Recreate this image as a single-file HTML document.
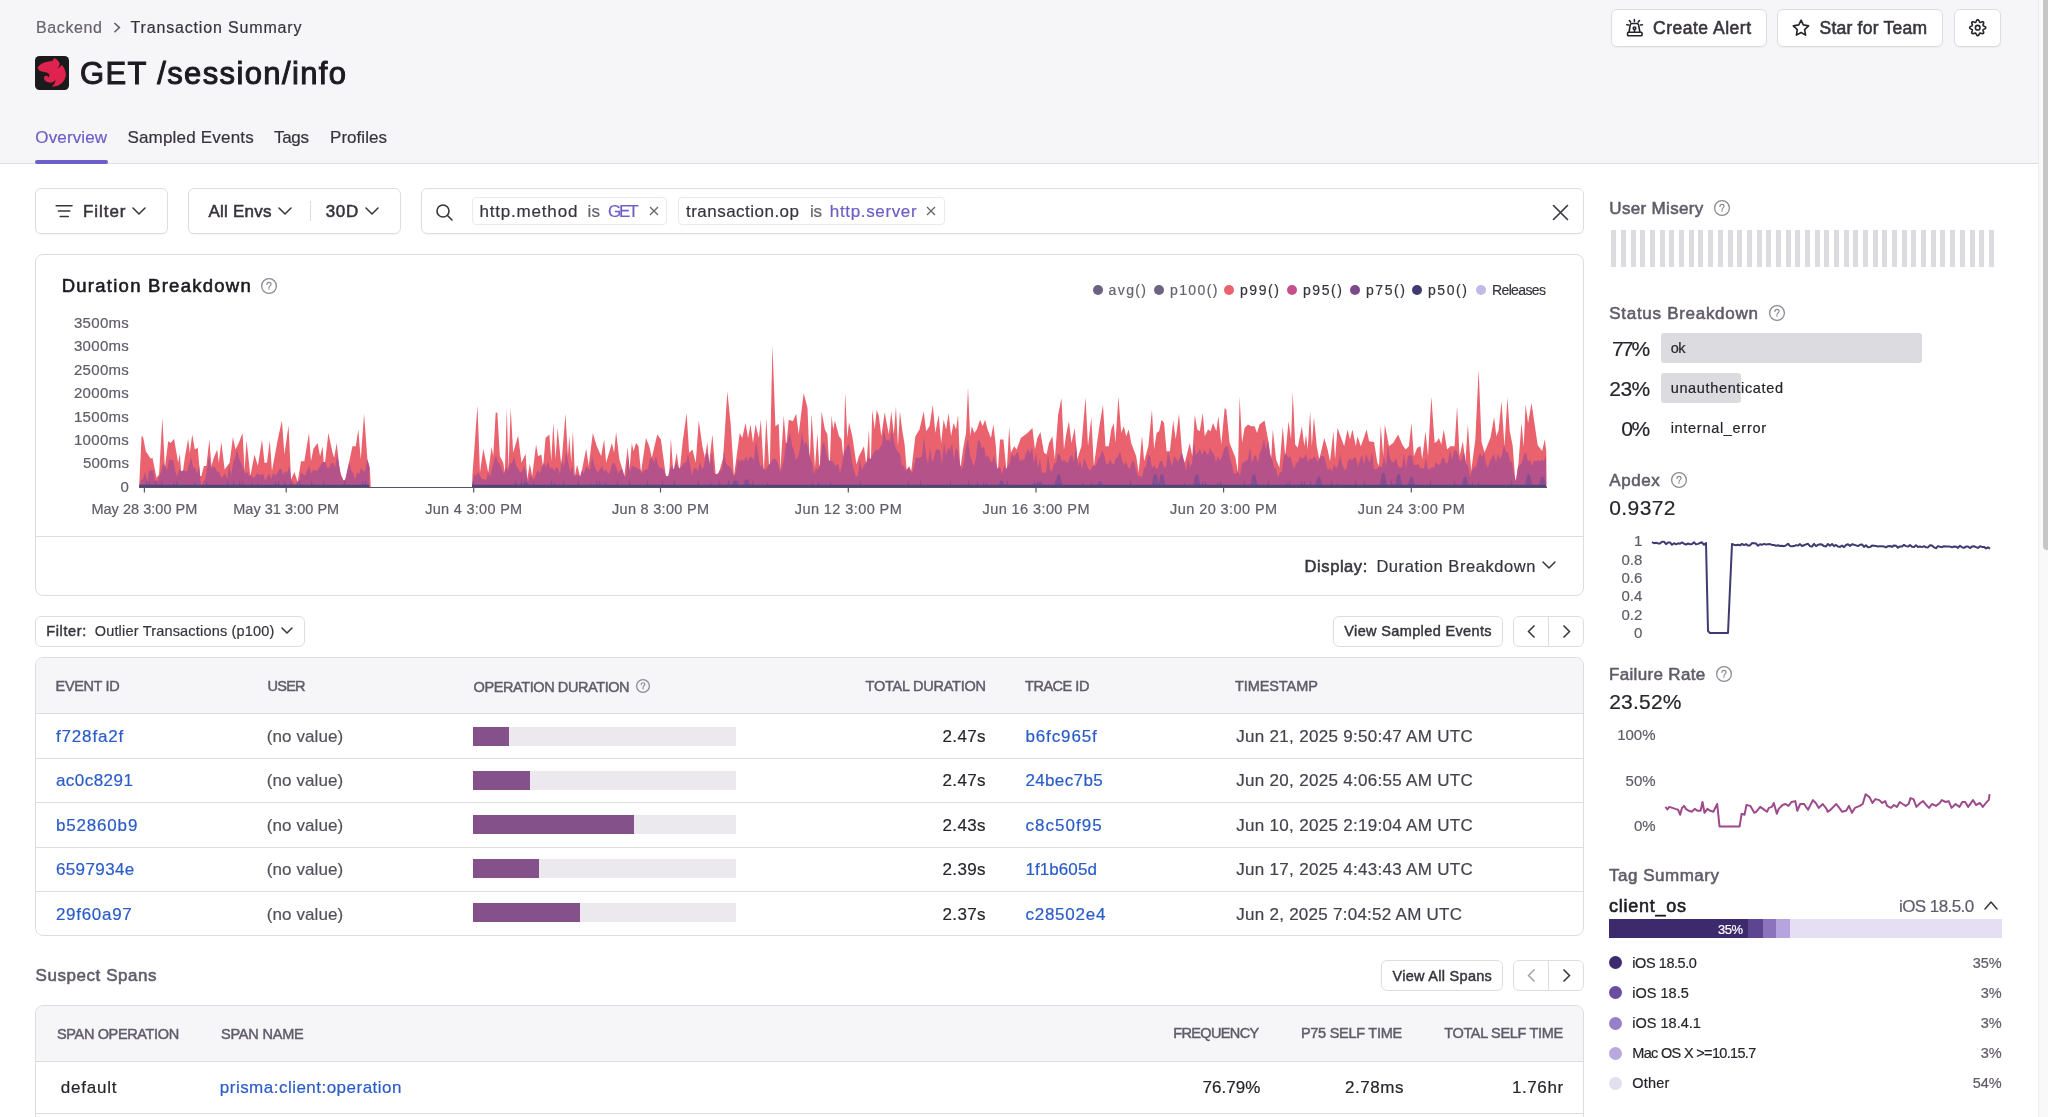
<!DOCTYPE html>
<html><head><meta charset="utf-8"><style>
html,body{margin:0;padding:0;}
body{width:2048px;height:1117px;position:relative;overflow:hidden;background:#ffffff;font-family:"Liberation Sans",sans-serif;}
.t{position:absolute;white-space:nowrap;line-height:1;}
#root{position:absolute;left:0;top:0;width:2048px;height:1117px;will-change:transform;}
.r{position:absolute;box-sizing:border-box;}
svg.r{overflow:visible;}
</style></head><body>
<div id="root">
<div class="r" style="left:0px;top:0px;width:2038px;height:163px;background:#f6f6f9;"></div>
<div class="r" style="left:0px;top:163px;width:2038px;height:1px;background:#dddce1;"></div>
<div class="r" style="left:2038px;top:0px;width:10px;height:1117px;background:#f9f9f9;"></div>
<div class="r" style="left:2038px;top:0px;width:1px;height:1117px;background:#ececec;"></div>
<div class="r" style="left:2043px;top:0px;width:5px;height:550px;background:#c6c6c6;border-radius:0 0 0 4px;"></div>
<div class="t " style="left:36.00px;top:19.76px;font-size:16px;color:#67636e;-webkit-text-stroke:0.2px #67636e;letter-spacing:0.617px;">Backend</div>
<svg class="r" style="left:110px;top:20px;" width="12" height="16" viewBox="0 0 12 16"><path d="M4.4 3 L9.4 7.6 L4.4 12.2" fill="none" stroke="#5f5b66" stroke-width="1.5"/></svg>
<div class="t " style="left:130.50px;top:19.76px;font-size:16px;color:#38343e;-webkit-text-stroke:0.2px #38343e;letter-spacing:0.839px;">Transaction Summary</div>
<svg class="r" style="left:35px;top:56px" width="34" height="34" viewBox="0 0 34 34"><rect width="34" height="34" rx="4.5" fill="#1b1a1c"/><path d="M2.4 11.4 C5 8.5 8 6.6 11 6 C13.5 5.5 16 5.3 17.9 4.5 L19 2.1 C21 2.8 23.5 4.5 24.6 7.2 C24.9 9 24 11 21.6 12.6 C23.5 12 25.5 10.5 26.8 9 C29.5 11.5 30.8 15 30.8 18.6 C30.8 23.5 27.5 28 22 30 L16.9 30.8 C18.8 29 20.6 26.5 20.5 23.5 C19.6 25.6 17.8 26.6 15.5 26.6 C11.8 26.6 9 24.5 9 21.8 C9 20.4 10.2 19.6 11.6 19.8 C12.6 20 13.3 20.7 13.5 21.5 C14.5 20.5 14.7 18.4 13.6 17.4 C11.5 15.8 7 16.2 4.5 14.8 Z" fill="#e0234e"/></svg>
<div class="t " style="left:80.00px;top:58.06px;font-size:31px;color:#1d1a21;-webkit-text-stroke:0.99px #1d1a21;letter-spacing:1.369px;">GET /session/info</div>
<div class="t " style="left:35.30px;top:129.31px;font-size:17px;color:#6c5fc7;-webkit-text-stroke:0.2px #6c5fc7;letter-spacing:0.143px;">Overview</div>
<div class="t " style="left:127.40px;top:129.31px;font-size:17px;color:#38343e;-webkit-text-stroke:0.2px #38343e;letter-spacing:0.200px;">Sampled Events</div>
<div class="t " style="left:274.00px;top:129.31px;font-size:17px;color:#38343e;-webkit-text-stroke:0.2px #38343e;letter-spacing:-0.300px;">Tags</div>
<div class="t " style="left:330.00px;top:129.31px;font-size:17px;color:#38343e;-webkit-text-stroke:0.2px #38343e;letter-spacing:0.043px;">Profiles</div>
<div class="r" style="left:35px;top:160px;width:73px;height:4px;background:#6c5fc7;border-radius:2px;"></div>
<div class="r" style="left:1611px;top:9px;width:156px;height:38px;background:#ffffff;border:1px solid #dddce1;border-radius:6px;box-sizing:border-box;box-shadow:0 1px 1px rgba(0,0,0,0.04);"></div>
<div class="r" style="left:1777px;top:9px;width:166px;height:38px;background:#ffffff;border:1px solid #dddce1;border-radius:6px;box-sizing:border-box;box-shadow:0 1px 1px rgba(0,0,0,0.04);"></div>
<div class="r" style="left:1954px;top:9px;width:47px;height:38px;background:#ffffff;border:1px solid #dddce1;border-radius:6px;box-sizing:border-box;box-shadow:0 1px 1px rgba(0,0,0,0.04);"></div>
<div class="t " style="left:1653.00px;top:19.69px;font-size:17.5px;color:#38343e;-webkit-text-stroke:0.56px #38343e;letter-spacing:0.509px;">Create Alert</div>
<div class="t " style="left:1819.50px;top:19.69px;font-size:17.5px;color:#38343e;-webkit-text-stroke:0.56px #38343e;letter-spacing:0.233px;">Star for Team</div>
<svg class="r" style="left:1624px;top:16px;" width="22" height="24" viewBox="0 0 22 24"><g fill="none" stroke="#27242c" stroke-width="1.6" stroke-linecap="round" stroke-linejoin="round"><path d="M10.4 3.6 V5.4 M5.3 4.5 L6.6 6.1 M15.5 4.5 L14.2 6.1 M2.8 8.7 L4.6 9 M16.6 9 L18.4 8.7"/><path d="M5.1 15.6 L6.2 9 Q6.5 7.5 8 7.5 H12.8 Q14.3 7.5 14.6 9 L15.8 15.6"/><circle cx="10.5" cy="12.3" r="1.3"/><path d="M10.5 13.6 V15.6"/><rect x="3.6" y="16.3" width="14.4" height="3.5" rx="0.8"/></g></svg>
<svg class="r" style="left:1785px;top:12px;" width="30" height="30" viewBox="0 0 30 30"><path d="M16.1 8.1 L18.3 12.9 L23.6 13.9 L19.6 17.7 L20.6 23.1 L16.1 20.5 L11.4 23.1 L12.3 17.7 L8.3 13.9 L13.8 12.9 Z" fill="none" stroke="#27242c" stroke-width="1.6" stroke-linejoin="round"/></svg>
<svg class="r" style="left:1962px;top:12px;" width="32" height="32" viewBox="0 0 32 32"><g fill="none" stroke="#27242c" stroke-width="1.6" stroke-linejoin="round"><path d="M15.70 7.65 L16.22 7.82 L16.68 8.29 L17.05 8.93 L17.34 9.59 L17.60 10.11 L17.90 10.39 L18.31 10.40 L18.86 10.22 L19.53 9.96 L20.25 9.77 L20.91 9.76 L21.39 10.01 L21.64 10.49 L21.63 11.15 L21.44 11.87 L21.18 12.54 L21.00 13.09 L21.01 13.50 L21.29 13.80 L21.81 14.06 L22.47 14.35 L23.11 14.72 L23.58 15.18 L23.75 15.70 L23.58 16.22 L23.11 16.68 L22.47 17.05 L21.81 17.34 L21.29 17.60 L21.01 17.90 L21.00 18.31 L21.18 18.86 L21.44 19.53 L21.63 20.25 L21.64 20.91 L21.39 21.39 L20.91 21.64 L20.25 21.63 L19.53 21.44 L18.86 21.18 L18.31 21.00 L17.90 21.01 L17.60 21.29 L17.34 21.81 L17.05 22.47 L16.68 23.11 L16.22 23.58 L15.70 23.75 L15.18 23.58 L14.72 23.11 L14.35 22.47 L14.06 21.81 L13.80 21.29 L13.50 21.01 L13.09 21.00 L12.54 21.18 L11.87 21.44 L11.15 21.63 L10.49 21.64 L10.01 21.39 L9.76 20.91 L9.77 20.25 L9.96 19.53 L10.22 18.86 L10.40 18.31 L10.39 17.90 L10.11 17.60 L9.59 17.34 L8.93 17.05 L8.29 16.68 L7.82 16.22 L7.65 15.70 L7.82 15.18 L8.29 14.72 L8.93 14.35 L9.59 14.06 L10.11 13.80 L10.39 13.50 L10.40 13.09 L10.22 12.54 L9.96 11.87 L9.77 11.15 L9.76 10.49 L10.01 10.01 L10.49 9.76 L11.15 9.77 L11.87 9.96 L12.54 10.22 L13.09 10.40 L13.50 10.39 L13.80 10.11 L14.06 9.59 L14.35 8.93 L14.72 8.29 L15.18 7.82 L15.70 7.65 Z"/><circle cx="15.7" cy="15.7" r="2.3"/></g></svg>
<div class="r" style="left:35px;top:188px;width:133px;height:46px;background:#ffffff;border:1px solid #dddce1;border-radius:6px;box-sizing:border-box;box-shadow:0 1px 1px rgba(0,0,0,0.04);"></div>
<svg class="r" style="left:54px;top:203px;" width="22" height="17" viewBox="0 0 22 17"><g stroke="#38343e" stroke-width="1.6" stroke-linecap="round"><path d="M2.2 2.7 H18 M4.4 8 H15.8 M6.2 13.5 H14.2"/></g></svg>
<div class="t " style="left:82.90px;top:203.11px;font-size:17px;color:#38343e;-webkit-text-stroke:0.54px #38343e;letter-spacing:0.960px;">Filter</div>
<svg class="r" style="left:131.5px;top:207px;" width="14.0" height="8" viewBox="0 0 14.0 8"><path d="M1 1 L7.0 7 L13 1" fill="none" stroke="#38343e" stroke-width="1.5" stroke-linecap="round" stroke-linejoin="round"/></svg>
<div class="r" style="left:188px;top:188px;width:213px;height:46px;background:#ffffff;border:1px solid #dddce1;border-radius:6px;box-sizing:border-box;box-shadow:0 1px 1px rgba(0,0,0,0.04);"></div>
<div class="r" style="left:310px;top:201px;width:1px;height:20px;background:#dddce1;"></div>
<div class="t " style="left:208.50px;top:203.11px;font-size:17px;color:#38343e;-webkit-text-stroke:0.54px #38343e;letter-spacing:0.229px;">All Envs</div>
<svg class="r" style="left:278px;top:207px;" width="14" height="8" viewBox="0 0 14 8"><path d="M1 1 L7.0 7 L13 1" fill="none" stroke="#38343e" stroke-width="1.5" stroke-linecap="round" stroke-linejoin="round"/></svg>
<div class="t " style="left:325.70px;top:203.11px;font-size:17px;color:#38343e;-webkit-text-stroke:0.54px #38343e;letter-spacing:0.700px;">30D</div>
<svg class="r" style="left:365px;top:207px;" width="14" height="8" viewBox="0 0 14 8"><path d="M1 1 L7.0 7 L13 1" fill="none" stroke="#38343e" stroke-width="1.5" stroke-linecap="round" stroke-linejoin="round"/></svg>
<div class="r" style="left:421px;top:188px;width:1163px;height:46px;background:#ffffff;border:1px solid #dddce1;border-radius:6px;box-sizing:border-box;box-shadow:0 1px 1px rgba(0,0,0,0.04);"></div>
<svg class="r" style="left:434px;top:202px;" width="22" height="22" viewBox="0 0 22 22"><g fill="none" stroke="#38343e" stroke-width="1.6" stroke-linecap="round"><circle cx="9" cy="9" r="6"/><path d="M13.5 13.5 L18 18"/></g></svg>
<div class="r" style="left:472px;top:197px;width:195px;height:28px;background:#ffffff;border:1px solid #ebe8ef;border-radius:4px;box-sizing:border-box;"></div>
<div class="t " style="left:479.40px;top:203.11px;font-size:17px;color:#38343e;-webkit-text-stroke:0.2px #38343e;letter-spacing:0.820px;">http.method</div>
<div class="t " style="left:587.50px;top:203.11px;font-size:17px;color:#67636e;-webkit-text-stroke:0.2px #67636e;letter-spacing:0.200px;">is</div>
<div class="t " style="left:607.90px;top:203.11px;font-size:17px;color:#6c5fc7;-webkit-text-stroke:0.2px #6c5fc7;letter-spacing:-2.150px;">GET</div>
<svg class="r" style="left:648px;top:205px;" width="12" height="12" viewBox="0 0 12 12"><path d="M2 2 L10 10 M10 2 L2 10" stroke="#67636e" stroke-width="1.3"/></svg>
<div class="r" style="left:678px;top:197px;width:267px;height:28px;background:#ffffff;border:1px solid #ebe8ef;border-radius:4px;box-sizing:border-box;"></div>
<div class="t " style="left:686.00px;top:203.11px;font-size:17px;color:#38343e;-webkit-text-stroke:0.2px #38343e;letter-spacing:0.477px;">transaction.op</div>
<div class="t " style="left:810.00px;top:203.11px;font-size:17px;color:#67636e;-webkit-text-stroke:0.2px #67636e;letter-spacing:-0.300px;">is</div>
<div class="t " style="left:829.80px;top:203.11px;font-size:17px;color:#6c5fc7;-webkit-text-stroke:0.2px #6c5fc7;letter-spacing:0.650px;">http.server</div>
<svg class="r" style="left:925px;top:205px;" width="12" height="12" viewBox="0 0 12 12"><path d="M2 2 L10 10 M10 2 L2 10" stroke="#67636e" stroke-width="1.3"/></svg>
<svg class="r" style="left:1551px;top:203px;" width="19" height="19" viewBox="0 0 19 19"><path d="M2.5 2.5 L16.5 16.5 M16.5 2.5 L2.5 16.5" stroke="#38343e" stroke-width="1.6" stroke-linecap="round"/></svg>
<div class="r" style="left:35px;top:254px;width:1549px;height:342px;background:#ffffff;border:1px solid #dddce1;border-radius:8px;box-sizing:border-box;"></div>
<div class="r" style="left:36px;top:536px;width:1547px;height:1px;background:#dddce1;"></div>
<div class="t " style="left:61.70px;top:276.64px;font-size:18.5px;color:#1d1a21;-webkit-text-stroke:0.59px #1d1a21;letter-spacing:1.259px;">Duration Breakdown</div>
<svg class="r" style="left:260px;top:277px;" width="18" height="18" viewBox="0 0 18 18"><circle cx="9" cy="9" r="7.4" fill="none" stroke="#8c8a92" stroke-width="1.3"/><path d="M6.92 7.48 C6.92 5.80 8.04 5.32 9.00 5.32 C10.20 5.32 11.08 6.12 11.08 7.24 C11.08 8.68 9.00 9.16 9.00 10.76 M9.00 11.72 V12.36" fill="none" stroke="#8c8a92" stroke-width="1.15" stroke-linecap="round"/></svg>
<div class="r" style="left:1092.9px;top:284.5px;width:10.0px;height:10.0px;background:#6b6180;border-radius:5px;"></div>
<div class="t " style="left:1108.60px;top:282.65px;font-size:14px;color:#67636e;-webkit-text-stroke:0.2px #67636e;letter-spacing:1.375px;">avg()</div>
<div class="r" style="left:1154.2px;top:284.5px;width:10.0px;height:10.0px;background:#6d6382;border-radius:5px;"></div>
<div class="t " style="left:1170.00px;top:282.65px;font-size:14px;color:#67636e;-webkit-text-stroke:0.2px #67636e;letter-spacing:1.400px;">p100()</div>
<div class="r" style="left:1224px;top:284.5px;width:10px;height:10.0px;background:#e9626e;border-radius:5px;"></div>
<div class="t " style="left:1240.00px;top:282.65px;font-size:14px;color:#38343e;-webkit-text-stroke:0.2px #38343e;letter-spacing:1.575px;">p99()</div>
<div class="r" style="left:1287px;top:284.5px;width:10px;height:10.0px;background:#c5508a;border-radius:5px;"></div>
<div class="t " style="left:1303.00px;top:282.65px;font-size:14px;color:#38343e;-webkit-text-stroke:0.2px #38343e;letter-spacing:1.575px;">p95()</div>
<div class="r" style="left:1350px;top:284.5px;width:10px;height:10.0px;background:#7c4a8c;border-radius:5px;"></div>
<div class="t " style="left:1366.00px;top:282.65px;font-size:14px;color:#38343e;-webkit-text-stroke:0.2px #38343e;letter-spacing:1.575px;">p75()</div>
<div class="r" style="left:1412.4px;top:284.5px;width:10.0px;height:10.0px;background:#3f3b72;border-radius:5px;"></div>
<div class="t " style="left:1428.00px;top:282.65px;font-size:14px;color:#38343e;-webkit-text-stroke:0.2px #38343e;letter-spacing:1.575px;">p50()</div>
<div class="r" style="left:1476px;top:284.5px;width:10px;height:10.0px;background:#c3b9e9;border-radius:5px;"></div>
<div class="t " style="left:1492.00px;top:282.65px;font-size:14px;color:#38343e;-webkit-text-stroke:0.2px #38343e;letter-spacing:-0.629px;">Releases</div>
<div class="t " style="left:73.90px;top:314.90px;font-size:15px;color:#605b69;-webkit-text-stroke:0.2px #605b69;letter-spacing:0.320px;">3500ms</div>
<div class="t " style="left:73.90px;top:338.30px;font-size:15px;color:#605b69;-webkit-text-stroke:0.2px #605b69;letter-spacing:0.320px;">3000ms</div>
<div class="t " style="left:73.90px;top:361.70px;font-size:15px;color:#605b69;-webkit-text-stroke:0.2px #605b69;letter-spacing:0.320px;">2500ms</div>
<div class="t " style="left:73.90px;top:385.10px;font-size:15px;color:#605b69;-webkit-text-stroke:0.2px #605b69;letter-spacing:0.320px;">2000ms</div>
<div class="t " style="left:73.90px;top:408.50px;font-size:15px;color:#605b69;-webkit-text-stroke:0.2px #605b69;letter-spacing:0.320px;">1500ms</div>
<div class="t " style="left:73.90px;top:431.90px;font-size:15px;color:#605b69;-webkit-text-stroke:0.2px #605b69;letter-spacing:0.320px;">1000ms</div>
<div class="t " style="left:82.90px;top:455.30px;font-size:15px;color:#605b69;-webkit-text-stroke:0.2px #605b69;letter-spacing:0.250px;">500ms</div>
<div class="t " style="left:120.60px;top:478.70px;font-size:15px;color:#605b69;-webkit-text-stroke:0.2px #605b69;">0</div>
<div class="t " style="left:91.40px;top:502.03px;font-size:14.5px;color:#605b69;-webkit-text-stroke:0.2px #605b69;letter-spacing:0.031px;">May 28 3:00 PM</div>
<div class="t " style="left:233.20px;top:502.03px;font-size:14.5px;color:#605b69;-webkit-text-stroke:0.2px #605b69;letter-spacing:0.031px;">May 31 3:00 PM</div>
<div class="t " style="left:425.20px;top:502.03px;font-size:14.5px;color:#605b69;-webkit-text-stroke:0.2px #605b69;letter-spacing:0.292px;">Jun 4 3:00 PM</div>
<div class="t " style="left:612.00px;top:502.03px;font-size:14.5px;color:#605b69;-webkit-text-stroke:0.2px #605b69;letter-spacing:0.292px;">Jun 8 3:00 PM</div>
<div class="t " style="left:794.80px;top:502.03px;font-size:14.5px;color:#605b69;-webkit-text-stroke:0.2px #605b69;letter-spacing:0.415px;">Jun 12 3:00 PM</div>
<div class="t " style="left:982.50px;top:502.03px;font-size:14.5px;color:#605b69;-webkit-text-stroke:0.2px #605b69;letter-spacing:0.415px;">Jun 16 3:00 PM</div>
<div class="t " style="left:1170.10px;top:502.03px;font-size:14.5px;color:#605b69;-webkit-text-stroke:0.2px #605b69;letter-spacing:0.415px;">Jun 20 3:00 PM</div>
<div class="t " style="left:1357.80px;top:502.03px;font-size:14.5px;color:#605b69;-webkit-text-stroke:0.2px #605b69;letter-spacing:0.415px;">Jun 24 3:00 PM</div>
<svg class="r" style="left:130px;top:330px;" width="1430" height="170" viewBox="0 0 1430 170"><path d="M9.15 157.50 L9.15 126.16 L9.15 156.04 L11.64 105.41 L13.30 107.90 L15.79 121.18 L20.77 128.65 L22.43 127.82 L26.58 147.74 L29.07 144.42 L32.39 87.98 L34.88 137.78 L38.20 111.22 L40.69 112.88 L44.01 108.73 L48.16 132.80 L49.82 123.67 L51.81 149.40 L54.80 127.82 L58.12 108.73 L59.78 122.84 L62.27 104.58 L64.76 119.52 L67.75 117.86 L70.07 146.08 L71.40 146.08 L73.89 136.12 L76.38 136.12 L79.37 109.56 L81.36 136.12 L83.85 127.82 L87.17 119.52 L88.83 132.80 L91.32 112.05 L94.64 139.44 L99.62 132.80 L102.94 107.07 L105.43 119.52 L108.75 112.88 L112.57 102.92 L114.56 141.10 L116.55 110.39 L120.37 146.08 L124.52 124.50 L127.84 136.12 L131.99 109.56 L134.48 132.80 L136.97 132.80 L139.79 110.39 L141.95 141.10 L147.76 109.56 L151.91 90.47 L154.40 124.50 L158.55 95.45 L161.04 149.40 L164.36 141.93 L167.68 151.89 L171.00 131.14 L174.32 131.14 L178.97 102.92 L180.96 131.14 L183.45 118.69 L187.60 112.88 L190.09 126.16 L192.58 116.20 L194.24 139.44 L198.39 102.92 L202.54 122.84 L204.20 127.82 L206.69 112.88 L210.01 142.76 L214.50 152.72 L217.48 139.44 L222.46 116.20 L225.78 116.20 L228.27 99.60 L230.76 129.48 L234.08 83.83 L237.40 129.48 L239.89 137.78 L240.72 156.04 L240.72 157.50 Z M341.99 157.50 L341.99 156.04 L342.49 144.42 L347.47 75.53 L349.96 142.76 L353.28 118.69 L358.26 142.76 L361.58 117.03 L363.24 126.16 L365.73 82.17 L367.39 83.00 L369.88 126.16 L373.20 132.80 L374.86 142.76 L376.85 78.85 L378.51 139.44 L380.67 78.02 L383.16 122.84 L388.14 105.41 L391.46 132.80 L395.61 123.67 L397.27 149.40 L399.76 133.63 L402.25 146.08 L406.07 114.54 L408.06 126.16 L411.38 124.50 L413.04 137.78 L415.53 107.90 L419.35 104.58 L421.34 131.14 L423.33 92.13 L425.49 129.48 L427.65 97.94 L431.30 136.12 L435.45 83.83 L437.94 126.16 L439.27 106.24 L441.26 132.80 L442.92 100.43 L444.91 146.08 L447.07 134.46 L450.39 147.74 L456.20 118.69 L458.69 136.12 L462.84 102.92 L466.16 114.54 L471.14 126.16 L474.13 109.56 L476.12 132.80 L481.93 112.88 L484.09 122.84 L486.08 102.09 L489.40 129.48 L494.38 146.08 L497.70 117.03 L499.36 141.10 L501.85 112.88 L503.51 121.18 L506.00 112.88 L508.49 116.20 L510.98 142.76 L515.96 107.90 L519.28 116.20 L521.77 127.82 L527.25 104.58 L530.90 109.56 L535.88 146.08 L539.20 146.08 L540.86 107.90 L543.35 142.76 L546.67 122.84 L549.50 142.76 L552.82 110.39 L556.63 83.00 L559.12 122.84 L562.44 119.52 L565.76 132.80 L568.75 90.47 L572.40 116.20 L574.89 127.82 L577.38 112.05 L579.04 134.46 L582.36 104.58 L585.68 144.42 L589.00 142.76 L593.15 127.82 L597.30 61.42 L600.62 92.96 L603.94 146.08 L606.43 127.82 L609.75 102.92 L612.24 107.90 L615.56 92.96 L618.05 107.90 L620.54 94.62 L623.03 112.88 L625.52 94.62 L628.84 107.90 L630.84 89.64 L633.82 142.76 L636.31 87.98 L639.63 146.08 L642.46 14.94 L645.44 96.28 L648.76 93.79 L650.42 139.44 L653.75 85.49 L656.24 116.20 L658.73 89.64 L662.88 91.30 L666.20 83.83 L668.69 104.58 L673.67 63.08 L677.49 78.02 L679.65 132.80 L681.64 83.83 L684.96 137.78 L687.45 102.92 L689.61 146.08 L691.60 81.34 L694.92 99.60 L697.41 104.58 L699.57 141.10 L701.56 85.49 L703.22 99.60 L704.88 90.47 L709.03 106.24 L711.52 109.56 L713.51 129.48 L715.17 62.25 L717.33 107.90 L718.99 92.13 L722.31 106.24 L726.46 134.46 L728.95 126.16 L733.93 116.20 L736.42 136.12 L738.91 99.60 L740.57 144.42 L742.23 79.68 L744.72 99.60 L746.71 79.68 L748.87 86.32 L751.36 106.24 L754.68 82.17 L756.67 92.96 L758.83 104.58 L761.32 81.34 L763.81 104.58 L765.97 76.36 L767.96 116.20 L769.95 81.34 L772.11 99.60 L774.60 114.54 L776.59 139.44 L779.25 136.12 L781.24 141.10 L785.39 106.24 L789.54 99.60 L793.69 81.34 L796.18 101.26 L799.50 96.28 L802.82 74.70 L805.31 102.92 L808.63 84.66 L811.12 112.88 L813.61 89.64 L816.10 99.60 L818.59 83.00 L821.08 106.24 L823.57 92.96 L826.06 99.60 L828.05 84.66 L830.21 139.44 L833.53 116.20 L836.02 102.92 L838.01 57.27 L840.17 106.24 L841.83 96.28 L844.32 102.92 L846.81 99.60 L850.13 89.64 L852.62 96.28 L855.11 89.64 L857.60 99.60 L860.92 107.90 L863.41 94.62 L865.90 116.20 L867.56 144.42 L870.05 109.56 L873.37 109.56 L876.69 142.76 L879.18 97.11 L880.84 122.84 L884.16 116.20 L886.65 119.52 L890.80 107.90 L897.44 102.92 L902.42 97.94 L904.91 119.52 L907.40 107.90 L910.39 102.09 L914.04 122.84 L916.53 124.50 L919.02 112.88 L922.34 106.24 L924.83 129.48 L928.15 84.66 L931.47 68.06 L933.96 119.52 L936.45 102.92 L938.94 91.30 L941.43 112.88 L944.75 97.94 L947.24 129.48 L951.39 116.20 L955.54 67.23 L958.03 116.20 L961.35 87.15 L963.84 136.12 L969.65 94.62 L972.97 74.70 L975.46 116.20 L978.78 116.20 L981.27 99.60 L983.76 92.96 L985.42 112.88 L988.41 66.40 L991.24 102.92 L993.73 96.28 L996.22 106.24 L998.71 99.60 L1001.20 112.88 L1006.18 126.16 L1008.67 142.76 L1011.99 105.41 L1014.15 131.14 L1018.30 116.20 L1021.95 79.68 L1024.11 119.52 L1026.60 102.92 L1029.09 101.26 L1031.58 89.64 L1034.07 92.96 L1036.56 121.18 L1039.88 121.18 L1043.20 90.47 L1045.69 109.56 L1049.01 83.83 L1052.33 126.16 L1054.82 132.80 L1059.80 112.88 L1062.29 126.16 L1064.78 84.66 L1067.27 99.60 L1069.76 101.26 L1072.75 83.00 L1074.74 106.24 L1078.06 99.60 L1080.55 101.26 L1083.04 92.96 L1086.36 101.26 L1088.35 86.32 L1091.34 114.54 L1094.66 78.02 L1096.32 79.68 L1099.64 112.88 L1105.45 127.82 L1107.94 142.76 L1109.60 66.40 L1112.09 112.88 L1114.58 97.94 L1117.90 94.62 L1121.22 96.28 L1124.54 96.28 L1127.03 102.92 L1129.52 94.62 L1134.50 90.47 L1137.82 107.90 L1141.14 129.48 L1142.80 99.60 L1146.12 129.48 L1149.44 137.78 L1152.76 96.28 L1155.25 126.16 L1158.57 91.30 L1161.06 109.56 L1162.72 62.25 L1165.21 114.54 L1167.70 117.86 L1171.85 96.28 L1174.34 116.20 L1176.00 104.58 L1177.66 119.52 L1180.15 81.34 L1181.81 116.20 L1183.97 87.15 L1186.79 116.20 L1189.28 129.48 L1194.26 107.90 L1197.58 119.52 L1200.07 131.14 L1203.39 101.26 L1205.05 129.48 L1207.54 97.94 L1211.69 109.56 L1214.18 116.20 L1217.50 99.60 L1219.99 109.56 L1222.48 99.60 L1225.80 116.20 L1227.46 106.24 L1230.78 116.20 L1233.27 109.56 L1236.59 99.60 L1239.08 111.22 L1244.06 112.05 L1247.38 132.80 L1249.04 136.12 L1250.70 95.45 L1253.19 126.16 L1254.85 94.62 L1259.00 116.20 L1263.15 112.88 L1268.13 104.58 L1272.28 114.54 L1275.60 119.52 L1278.92 116.20 L1281.41 92.96 L1283.90 126.16 L1287.22 117.86 L1290.54 116.20 L1292.20 129.48 L1295.52 101.26 L1298.01 126.16 L1301.33 66.40 L1304.65 112.88 L1307.14 111.22 L1308.80 107.90 L1311.29 114.54 L1313.78 99.60 L1317.10 119.52 L1320.42 116.20 L1324.58 116.20 L1327.07 76.36 L1329.56 126.16 L1332.88 111.22 L1335.37 132.80 L1337.86 94.62 L1341.18 141.10 L1345.33 109.56 L1348.65 39.84 L1351.58 112.26 L1354.53 122.60 L1360.44 107.83 L1364.14 87.15 L1366.35 106.35 L1368.57 100.44 L1371.52 70.90 L1374.48 116.69 L1377.43 67.21 L1379.65 100.44 L1382.60 115.21 L1385.55 153.62 L1388.51 132.94 L1391.46 93.06 L1393.68 116.69 L1395.60 74.59 L1398.11 93.06 L1401.51 73.12 L1407.71 115.21 L1412.14 121.12 L1414.80 109.31 L1416.28 121.12 L1416.57 156.28 L1416.57 157.50 Z " fill="#e9626e"/><path d="M9.15 157.50 L9.15 157.50 L11.15 150.01 L13.15 148.80 L15.15 141.78 L17.15 152.64 L19.15 140.70 L21.15 140.59 L23.15 140.38 L25.15 150.20 L27.15 151.39 L29.15 146.74 L31.15 141.28 L33.15 133.51 L35.15 136.13 L37.15 140.19 L39.15 129.07 L41.15 130.28 L43.15 129.67 L45.15 140.35 L47.15 146.98 L49.15 139.12 L51.15 141.34 L53.15 140.24 L55.15 141.11 L57.15 141.13 L59.15 134.37 L61.15 127.51 L63.15 137.16 L65.15 137.90 L67.15 144.09 L69.15 135.37 L71.15 157.50 L73.15 151.60 L75.15 149.65 L77.15 138.49 L79.15 125.80 L81.15 139.35 L83.15 136.31 L85.15 137.45 L87.15 141.83 L89.15 141.87 L91.15 148.13 L93.15 145.97 L95.15 143.34 L97.15 149.69 L99.15 133.93 L101.15 145.98 L103.15 132.56 L105.15 127.03 L107.15 119.55 L109.15 129.17 L111.15 132.70 L113.15 137.77 L115.15 143.74 L117.15 141.98 L119.15 146.45 L121.15 144.48 L123.15 148.23 L125.15 146.42 L127.15 143.05 L129.15 144.95 L131.15 144.39 L133.15 144.09 L135.15 150.83 L137.15 146.77 L139.15 143.25 L141.15 149.50 L143.15 142.88 L145.15 145.68 L147.15 143.46 L149.15 139.15 L151.15 138.67 L153.15 145.05 L155.15 140.46 L157.15 143.38 L159.15 135.36 L161.15 149.66 L163.15 152.65 L165.15 154.68 L167.15 151.39 L169.15 151.55 L171.15 142.28 L173.15 144.44 L175.15 145.60 L177.15 140.57 L179.15 135.95 L181.15 143.43 L183.15 139.93 L185.15 140.36 L187.15 140.91 L189.15 137.64 L191.15 134.18 L193.15 132.24 L195.15 131.96 L197.15 138.08 L199.15 137.87 L201.15 133.62 L203.15 132.67 L205.15 137.74 L207.15 123.65 L209.15 136.03 L211.15 145.79 L213.15 150.23 L215.15 150.31 L217.15 141.42 L219.15 132.16 L221.15 139.88 L223.15 143.57 L225.15 149.59 L227.15 142.66 L229.15 144.11 L231.15 137.61 L233.15 141.25 L235.15 141.15 L237.15 129.03 L239.15 135.80 L239.15 157.50 Z M341.99 157.50 L341.99 157.50 L343.99 144.54 L345.99 145.75 L347.99 141.84 L349.99 146.05 L351.99 148.95 L353.99 148.94 L355.99 150.68 L357.99 141.97 L359.99 147.16 L361.99 138.49 L363.99 131.25 L365.99 125.45 L367.99 132.38 L369.99 134.59 L371.99 139.69 L373.99 144.28 L375.99 137.08 L377.99 141.01 L379.99 132.82 L381.99 133.74 L383.99 125.74 L385.99 135.85 L387.99 138.24 L389.99 142.37 L391.99 141.38 L393.99 135.88 L395.99 142.58 L397.99 153.34 L399.99 144.42 L401.99 147.97 L403.99 149.62 L405.99 144.13 L407.99 140.07 L409.99 143.56 L411.99 136.45 L413.99 132.77 L415.99 137.69 L417.99 131.20 L419.99 139.07 L421.99 137.32 L423.99 140.40 L425.99 137.62 L427.99 138.02 L429.99 144.33 L431.99 127.92 L433.99 138.08 L435.99 120.74 L437.99 131.17 L439.99 142.23 L441.99 135.43 L443.99 146.05 L445.99 145.21 L447.99 144.27 L449.99 146.64 L451.99 140.24 L453.99 143.72 L455.99 136.34 L457.99 138.33 L459.99 139.96 L461.99 126.11 L463.99 134.24 L465.99 139.39 L467.99 141.93 L469.99 139.46 L471.99 135.36 L473.99 141.78 L475.99 139.31 L477.99 143.84 L479.99 142.50 L481.99 133.99 L483.99 132.46 L485.99 136.39 L487.99 143.27 L489.99 140.96 L491.99 138.61 L493.99 145.28 L495.99 147.36 L497.99 124.56 L499.99 142.20 L501.99 135.43 L503.99 136.79 L505.99 136.90 L507.99 139.15 L509.99 138.90 L511.99 143.54 L513.99 140.18 L515.99 139.80 L517.99 138.74 L519.99 128.86 L521.99 127.39 L523.99 132.84 L525.99 126.05 L527.99 135.37 L529.99 138.30 L531.99 137.64 L533.99 140.30 L535.99 146.58 L537.99 146.58 L539.99 138.39 L541.99 136.20 L543.99 139.43 L545.99 132.30 L547.99 136.58 L549.99 138.42 L551.99 135.90 L553.99 132.47 L555.99 133.31 L557.99 123.66 L559.99 134.15 L561.99 145.58 L563.99 138.30 L565.99 137.98 L567.99 141.04 L569.99 131.78 L571.99 139.18 L573.99 136.57 L575.99 122.67 L577.99 124.05 L579.99 135.81 L581.99 122.60 L583.99 142.20 L585.99 144.77 L587.99 143.77 L589.99 139.71 L591.99 141.00 L593.99 120.91 L595.99 133.69 L597.99 135.27 L599.99 137.10 L601.99 140.15 L603.99 146.23 L605.99 141.72 L607.99 129.16 L609.99 131.87 L611.99 129.16 L613.99 131.50 L615.99 126.19 L617.99 131.37 L619.99 126.22 L621.99 127.53 L623.99 130.58 L625.99 110.03 L627.99 122.66 L629.99 137.12 L631.99 134.45 L633.99 139.58 L635.99 139.50 L637.99 136.10 L639.99 133.45 L641.99 130.61 L643.99 128.62 L645.99 129.24 L647.99 133.41 L649.99 141.67 L651.99 137.56 L653.99 129.45 L655.99 113.70 L657.99 111.27 L659.99 101.86 L661.99 115.88 L663.99 120.17 L665.99 130.20 L667.99 127.00 L669.99 118.32 L671.99 101.29 L673.99 115.27 L675.99 111.72 L677.99 117.05 L679.99 127.35 L681.99 131.98 L683.99 144.26 L685.99 137.97 L687.99 140.08 L689.99 134.11 L691.99 115.91 L693.99 111.33 L695.99 120.96 L697.99 128.90 L699.99 130.92 L701.99 130.30 L703.99 133.44 L705.99 136.00 L707.99 133.60 L709.99 142.54 L711.99 135.34 L713.99 121.40 L715.99 119.12 L717.99 113.39 L719.99 117.06 L721.99 132.63 L723.99 140.49 L725.99 147.28 L727.99 144.62 L729.99 129.82 L731.99 139.95 L733.99 135.28 L735.99 133.19 L737.99 127.69 L739.99 129.29 L741.99 126.02 L743.99 122.18 L745.99 119.39 L747.99 120.80 L749.99 117.22 L751.99 114.44 L753.99 98.64 L755.99 110.52 L757.99 109.49 L759.99 111.69 L761.99 98.81 L763.99 111.95 L765.99 118.62 L767.99 122.14 L769.99 123.80 L771.99 135.92 L773.99 135.87 L775.99 141.31 L777.99 138.19 L779.99 139.28 L781.99 143.63 L783.99 136.48 L785.99 126.93 L787.99 128.37 L789.99 127.39 L791.99 126.62 L793.99 107.12 L795.99 124.20 L797.99 134.15 L799.99 117.13 L801.99 132.32 L803.99 127.72 L805.99 119.39 L807.99 119.66 L809.99 120.19 L811.99 135.20 L813.99 111.40 L815.99 125.20 L817.99 117.83 L819.99 120.18 L821.99 113.39 L823.99 129.76 L825.99 117.26 L827.99 120.94 L829.99 134.35 L831.99 139.60 L833.99 131.37 L835.99 116.77 L837.99 108.97 L839.99 124.43 L841.99 131.17 L843.99 136.41 L845.99 127.52 L847.99 109.66 L849.99 111.77 L851.99 118.55 L853.99 116.45 L855.99 127.48 L857.99 125.13 L859.99 129.95 L861.99 132.70 L863.99 125.57 L865.99 135.18 L867.99 138.92 L869.99 136.41 L871.99 144.62 L873.99 136.12 L875.99 138.99 L877.99 136.07 L879.99 132.11 L881.99 123.32 L883.99 127.59 L885.99 123.78 L887.99 122.03 L889.99 131.78 L891.99 129.20 L893.99 129.96 L895.99 123.42 L897.99 118.59 L899.99 123.67 L901.99 117.00 L903.99 132.98 L905.99 122.42 L907.99 139.08 L909.99 128.02 L911.99 143.14 L913.99 142.30 L915.99 143.87 L917.99 124.92 L919.99 139.22 L921.99 141.76 L923.99 133.19 L925.99 133.35 L927.99 123.42 L929.99 125.10 L931.99 132.09 L933.99 129.79 L935.99 131.94 L937.99 133.10 L939.99 126.63 L941.99 124.58 L943.99 132.64 L945.99 114.12 L947.99 136.94 L949.99 130.87 L951.99 139.05 L953.99 128.27 L955.99 132.61 L957.99 138.18 L959.99 140.42 L961.99 137.25 L963.99 135.57 L965.99 135.89 L967.99 128.87 L969.99 127.21 L971.99 120.02 L973.99 124.26 L975.99 133.42 L977.99 134.66 L979.99 129.28 L981.99 133.13 L983.99 134.57 L985.99 127.81 L987.99 126.95 L989.99 121.28 L991.99 130.14 L993.99 135.16 L995.99 131.82 L997.99 137.30 L999.99 139.10 L1001.99 131.40 L1003.99 131.75 L1005.99 140.33 L1007.99 145.91 L1009.99 145.67 L1011.99 147.50 L1013.99 138.24 L1015.99 136.60 L1017.99 124.67 L1019.99 126.14 L1021.99 137.87 L1023.99 135.29 L1025.99 138.74 L1027.99 138.04 L1029.99 131.53 L1031.99 130.72 L1033.99 137.16 L1035.99 137.35 L1037.99 121.68 L1039.99 128.30 L1041.99 137.12 L1043.99 126.43 L1045.99 128.16 L1047.99 132.59 L1049.99 127.31 L1051.99 122.34 L1053.99 131.09 L1055.99 141.10 L1057.99 127.75 L1059.99 137.24 L1061.99 133.26 L1063.99 113.18 L1065.99 124.95 L1067.99 122.80 L1069.99 118.46 L1071.99 125.16 L1073.99 119.72 L1075.99 122.61 L1077.99 125.57 L1079.99 117.66 L1081.99 121.77 L1083.99 124.29 L1085.99 132.27 L1087.99 126.18 L1089.99 130.13 L1091.99 127.13 L1093.99 118.63 L1095.99 116.21 L1097.99 117.02 L1099.99 128.77 L1101.99 134.95 L1103.99 144.08 L1105.99 143.32 L1107.99 140.94 L1109.99 146.04 L1111.99 133.56 L1113.99 132.23 L1115.99 130.97 L1117.99 129.16 L1119.99 116.99 L1121.99 133.42 L1123.99 126.60 L1125.99 124.89 L1127.99 132.75 L1129.99 122.80 L1131.99 118.19 L1133.99 108.65 L1135.99 120.49 L1137.99 109.71 L1139.99 124.49 L1141.99 128.72 L1143.99 137.77 L1145.99 138.33 L1147.99 148.03 L1149.99 141.63 L1151.99 141.72 L1153.99 126.59 L1155.99 123.04 L1157.99 128.28 L1159.99 125.80 L1161.99 132.34 L1163.99 139.30 L1165.99 133.01 L1167.99 132.50 L1169.99 126.29 L1171.99 128.44 L1173.99 128.01 L1175.99 123.82 L1177.99 132.34 L1179.99 127.86 L1181.99 129.69 L1183.99 126.44 L1185.99 128.80 L1187.99 131.87 L1189.99 127.28 L1191.99 125.65 L1193.99 126.32 L1195.99 133.65 L1197.99 140.23 L1199.99 137.72 L1201.99 141.70 L1203.99 133.67 L1205.99 138.39 L1207.99 135.85 L1209.99 124.11 L1211.99 134.09 L1213.99 138.92 L1215.99 140.26 L1217.99 130.78 L1219.99 128.60 L1221.99 130.49 L1223.99 127.49 L1225.99 127.51 L1227.99 136.98 L1229.99 129.97 L1231.99 125.18 L1233.99 135.05 L1235.99 123.76 L1237.99 128.91 L1239.99 132.85 L1241.99 121.51 L1243.99 139.08 L1245.99 139.23 L1247.99 138.05 L1249.99 136.51 L1251.99 137.75 L1253.99 126.71 L1255.99 136.50 L1257.99 115.75 L1259.99 128.42 L1261.99 132.07 L1263.99 132.49 L1265.99 127.52 L1267.99 136.31 L1269.99 137.72 L1271.99 137.08 L1273.99 123.26 L1275.99 138.43 L1277.99 126.27 L1279.99 124.65 L1281.99 126.29 L1283.99 134.79 L1285.99 135.56 L1287.99 134.03 L1289.99 137.74 L1291.99 138.27 L1293.99 138.57 L1295.99 128.14 L1297.99 139.73 L1299.99 139.00 L1301.99 136.93 L1303.99 137.63 L1305.99 131.83 L1307.99 134.49 L1309.99 134.93 L1311.99 128.18 L1313.99 127.83 L1315.99 133.81 L1317.99 132.21 L1319.99 120.33 L1321.99 130.14 L1323.99 121.13 L1325.99 120.01 L1327.99 124.29 L1329.99 131.41 L1331.99 129.20 L1333.99 121.40 L1335.99 133.83 L1337.99 135.62 L1339.99 146.89 L1341.99 140.50 L1343.99 136.28 L1345.99 137.64 L1347.99 128.83 L1349.99 123.37 L1351.99 127.17 L1353.99 122.45 L1355.99 133.95 L1357.99 137.89 L1359.99 130.87 L1361.99 127.04 L1363.99 124.59 L1365.99 132.49 L1367.99 123.86 L1369.99 129.58 L1371.99 124.96 L1373.99 114.85 L1375.99 122.48 L1377.99 121.80 L1379.99 132.04 L1381.99 131.57 L1383.99 145.51 L1385.99 151.05 L1387.99 137.05 L1389.99 135.21 L1391.99 132.58 L1393.99 124.24 L1395.99 122.80 L1397.99 131.70 L1399.99 129.47 L1401.99 136.08 L1403.99 130.75 L1405.99 131.55 L1407.99 130.33 L1409.99 131.47 L1411.99 129.83 L1413.99 131.10 L1415.99 124.39 L1415.99 157.50 Z " fill="#b6528a"/><path d="M867.6 157.5 L870.1 151.3 L871.6 150.3 L873.1 151.3 L875.6 157.5 Z M924.7 157.5 L927.2 144.9 L928.7 143.9 L930.2 144.9 L932.7 157.5 Z M1021.2 157.5 L1023.7 144.9 L1025.2 143.9 L1026.7 144.9 L1029.2 157.5 Z M1027.9 157.5 L1030.4 144.9 L1031.9 143.9 L1033.4 144.9 L1035.9 157.5 Z M1062.8 157.5 L1065.3 144.9 L1066.8 143.9 L1068.3 144.9 L1070.8 157.5 Z M1119.9 157.5 L1122.4 144.9 L1123.9 143.9 L1125.4 144.9 L1127.9 157.5 Z M1184.7 157.5 L1187.2 147.5 L1188.7 146.5 L1190.2 147.5 L1192.7 157.5 Z M1249.4 157.5 L1251.9 143.7 L1253.4 142.7 L1254.9 143.7 L1257.4 157.5 Z M1264.7 157.5 L1267.2 144.9 L1268.7 143.9 L1270.2 144.9 L1272.7 157.5 Z M1277.4 157.5 L1279.9 147.5 L1281.4 146.5 L1282.9 147.5 L1285.4 157.5 Z M1331.0 157.5 L1333.5 147.5 L1335.0 146.5 L1336.5 147.5 L1339.0 157.5 Z M1394.5 157.5 L1397.0 144.9 L1398.5 143.9 L1400.0 144.9 L1402.5 157.5 Z M1408.5 157.5 L1411.0 147.5 L1412.5 146.5 L1414.0 147.5 L1416.5 157.5 Z M612.6 157.5 L615.1 150.0 L616.6 149.0 L618.1 150.0 L620.6 157.5 Z M391.9 157.5 L394.4 152.6 L395.9 151.6 L397.4 152.6 L399.9 157.5 Z M601.0 157.5 L603.5 151.3 L605.0 150.3 L606.5 151.3 L609.0 157.5 Z M906.0 157.5 L908.5 152.6 L910.0 151.6 L911.5 152.6 L914.0 157.5 Z M966.0 157.5 L968.5 151.9 L970.0 150.9 L971.5 151.9 L974.0 157.5 Z M15.2 157.5 L16.7 148.9 L18.2 157.5 Z M18.2 157.5 L19.7 150.0 L21.2 157.5 Z M24.2 157.5 L25.7 149.8 L27.2 157.5 Z M30.2 157.5 L31.7 150.4 L33.2 157.5 Z M42.2 157.5 L43.7 150.8 L45.2 157.5 Z M45.2 157.5 L46.7 150.0 L48.2 157.5 Z M63.2 157.5 L64.7 150.6 L66.2 157.5 Z M75.2 157.5 L76.7 150.7 L78.2 157.5 Z M96.2 157.5 L97.7 150.4 L99.2 157.5 Z M102.2 157.5 L103.7 150.2 L105.2 157.5 Z M108.2 157.5 L109.7 149.7 L111.2 157.5 Z M111.2 157.5 L112.7 149.8 L114.2 157.5 Z M120.2 157.5 L121.7 151.2 L123.2 157.5 Z M126.2 157.5 L127.7 151.2 L129.2 157.5 Z M144.2 157.5 L145.7 149.8 L147.2 157.5 Z M147.2 157.5 L148.7 149.7 L150.2 157.5 Z M153.2 157.5 L154.7 149.8 L156.2 157.5 Z M159.2 157.5 L160.7 150.7 L162.2 157.5 Z M168.2 157.5 L169.7 149.4 L171.2 157.5 Z M180.2 157.5 L181.7 150.4 L183.2 157.5 Z M192.2 157.5 L193.7 150.5 L195.2 157.5 Z M213.2 157.5 L214.7 149.1 L216.2 157.5 Z M231.2 157.5 L232.7 149.6 L234.2 157.5 Z M234.2 157.5 L235.7 149.1 L237.2 157.5 Z M342.0 157.5 L343.5 149.2 L345.0 157.5 Z M384.0 157.5 L385.5 149.0 L387.0 157.5 Z M390.0 157.5 L391.5 148.6 L393.0 157.5 Z M393.0 157.5 L394.5 148.7 L396.0 157.5 Z M402.0 157.5 L403.5 151.3 L405.0 157.5 Z M420.0 157.5 L421.5 149.8 L423.0 157.5 Z M423.0 157.5 L424.5 151.2 L426.0 157.5 Z M432.0 157.5 L433.5 150.1 L435.0 157.5 Z M447.0 157.5 L448.5 149.4 L450.0 157.5 Z M459.0 157.5 L460.5 151.4 L462.0 157.5 Z M465.0 157.5 L466.5 149.6 L468.0 157.5 Z M468.0 157.5 L469.5 149.2 L471.0 157.5 Z M474.0 157.5 L475.5 151.0 L477.0 157.5 Z M486.0 157.5 L487.5 150.1 L489.0 157.5 Z M498.0 157.5 L499.5 148.5 L501.0 157.5 Z M516.0 157.5 L517.5 149.6 L519.0 157.5 Z M531.0 157.5 L532.5 149.4 L534.0 157.5 Z M543.0 157.5 L544.5 149.7 L546.0 157.5 Z M567.0 157.5 L568.5 149.7 L570.0 157.5 Z M579.0 157.5 L580.5 150.9 L582.0 157.5 Z M588.0 157.5 L589.5 150.4 L591.0 157.5 Z M597.0 157.5 L598.5 149.2 L600.0 157.5 Z M606.0 157.5 L607.5 148.6 L609.0 157.5 Z M621.0 157.5 L622.5 150.5 L624.0 157.5 Z M636.0 157.5 L637.5 151.1 L639.0 157.5 Z M681.0 157.5 L682.5 151.2 L684.0 157.5 Z M687.0 157.5 L688.5 150.7 L690.0 157.5 Z M699.0 157.5 L700.5 150.7 L702.0 157.5 Z M729.0 157.5 L730.5 150.5 L732.0 157.5 Z M777.0 157.5 L778.5 149.9 L780.0 157.5 Z M789.0 157.5 L790.5 149.6 L792.0 157.5 Z M819.0 157.5 L820.5 149.8 L822.0 157.5 Z M837.0 157.5 L838.5 149.3 L840.0 157.5 Z M846.0 157.5 L847.5 151.5 L849.0 157.5 Z M852.0 157.5 L853.5 151.1 L855.0 157.5 Z M855.0 157.5 L856.5 151.2 L858.0 157.5 Z M876.0 157.5 L877.5 149.4 L879.0 157.5 Z M903.0 157.5 L904.5 149.4 L906.0 157.5 Z M906.0 157.5 L907.5 150.1 L909.0 157.5 Z M924.0 157.5 L925.5 150.1 L927.0 157.5 Z M951.0 157.5 L952.5 150.9 L954.0 157.5 Z M960.0 157.5 L961.5 151.1 L963.0 157.5 Z M999.0 157.5 L1000.5 149.1 L1002.0 157.5 Z M1023.0 157.5 L1024.5 150.4 L1026.0 157.5 Z M1053.0 157.5 L1054.5 151.3 L1056.0 157.5 Z M1071.0 157.5 L1072.5 150.6 L1074.0 157.5 Z M1074.0 157.5 L1075.5 150.3 L1077.0 157.5 Z M1086.0 157.5 L1087.5 151.0 L1089.0 157.5 Z M1089.0 157.5 L1090.5 149.8 L1092.0 157.5 Z M1113.0 157.5 L1114.5 150.4 L1116.0 157.5 Z M1137.0 157.5 L1138.5 148.6 L1140.0 157.5 Z M1155.0 157.5 L1156.5 150.9 L1158.0 157.5 Z M1158.0 157.5 L1159.5 149.9 L1161.0 157.5 Z M1170.0 157.5 L1171.5 150.1 L1173.0 157.5 Z M1173.0 157.5 L1174.5 150.6 L1176.0 157.5 Z M1179.0 157.5 L1180.5 149.6 L1182.0 157.5 Z M1200.0 157.5 L1201.5 149.3 L1203.0 157.5 Z M1206.0 157.5 L1207.5 151.4 L1209.0 157.5 Z M1224.0 157.5 L1225.5 149.4 L1227.0 157.5 Z M1233.0 157.5 L1234.5 149.8 L1236.0 157.5 Z M1260.0 157.5 L1261.5 148.6 L1263.0 157.5 Z M1281.0 157.5 L1282.5 148.9 L1284.0 157.5 Z M1299.0 157.5 L1300.5 148.6 L1302.0 157.5 Z M1323.0 157.5 L1324.5 150.2 L1326.0 157.5 Z M1341.0 157.5 L1342.5 151.4 L1344.0 157.5 Z M1347.0 157.5 L1348.5 151.1 L1350.0 157.5 Z M1380.0 157.5 L1381.5 149.3 L1383.0 157.5 Z " fill="#8a4c90"/><path d="M9.15 157.50 L9.15 154.80 L239.15 154.80 L239.15 157.50 Z M341.99 157.50 L341.99 154.80 L1415.99 154.80 L1415.99 157.50 Z " fill="#51457c"/><path d="M9 157.5 H1417" stroke="#5a5068" stroke-width="1"/><path d="M14.4 157.5 V162.5" stroke="#5a5068" stroke-width="1.2"/><path d="M156.2 157.5 V162.5" stroke="#5a5068" stroke-width="1.2"/><path d="M343.7 157.5 V162.5" stroke="#5a5068" stroke-width="1.2"/><path d="M530.5 157.5 V162.5" stroke="#5a5068" stroke-width="1.2"/><path d="M718.3 157.5 V162.5" stroke="#5a5068" stroke-width="1.2"/><path d="M906.0 157.5 V162.5" stroke="#5a5068" stroke-width="1.2"/><path d="M1093.6 157.5 V162.5" stroke="#5a5068" stroke-width="1.2"/><path d="M1281.3 157.5 V162.5" stroke="#5a5068" stroke-width="1.2"/></svg>
<div class="t " style="left:1304.60px;top:558.23px;font-size:16.5px;color:#38343e;-webkit-text-stroke:0.53px #38343e;letter-spacing:0.571px;">Display:</div>
<div class="t " style="left:1376.40px;top:558.23px;font-size:16.5px;color:#38343e;-webkit-text-stroke:0.2px #38343e;letter-spacing:0.559px;">Duration Breakdown</div>
<svg class="r" style="left:1542px;top:561px;" width="14" height="8" viewBox="0 0 14 8"><path d="M1 1 L7.0 7 L13 1" fill="none" stroke="#38343e" stroke-width="1.5" stroke-linecap="round" stroke-linejoin="round"/></svg>
<div class="r" style="left:35px;top:616px;width:270px;height:31px;background:#ffffff;border:1px solid #dddce1;border-radius:6px;box-sizing:border-box;"></div>
<div class="t " style="left:46.20px;top:623.73px;font-size:14.5px;color:#38343e;-webkit-text-stroke:0.46px #38343e;letter-spacing:0.650px;">Filter:</div>
<div class="t " style="left:94.70px;top:623.73px;font-size:14.5px;color:#38343e;-webkit-text-stroke:0.2px #38343e;letter-spacing:0.185px;">Outlier Transactions (p100)</div>
<svg class="r" style="left:281px;top:627px;" width="12" height="7" viewBox="0 0 12 7"><path d="M1 1 L6.0 6 L11 1" fill="none" stroke="#38343e" stroke-width="1.5" stroke-linecap="round" stroke-linejoin="round"/></svg>
<div class="r" style="left:1333px;top:616px;width:170px;height:31px;background:#ffffff;border:1px solid #dddce1;border-radius:6px;box-sizing:border-box;"></div>
<div class="t " style="left:1344.30px;top:624.23px;font-size:14.5px;color:#38343e;-webkit-text-stroke:0.46px #38343e;letter-spacing:0.361px;">View Sampled Events</div>
<div class="r" style="left:1513px;top:616px;width:71px;height:31px;background:#ffffff;border:1px solid #dddce1;border-radius:6px;box-sizing:border-box;"></div>
<div class="r" style="left:1548px;top:617px;width:1px;height:29px;background:#dddce1;"></div>
<svg class="r" style="left:1525px;top:624px;" width="14" height="15" viewBox="0 0 14 15"><path d="M9.5 1.5 L3.5 7.5 L9.5 13.5" fill="none" stroke="#38343e" stroke-width="1.5"/></svg>
<svg class="r" style="left:1560px;top:624px;" width="14" height="15" viewBox="0 0 14 15"><path d="M3.5 1.5 L9.5 7.5 L3.5 13.5" fill="none" stroke="#38343e" stroke-width="1.5"/></svg>
<div class="r" style="left:35px;top:657px;width:1549px;height:279px;background:#ffffff;border:1px solid #dddce1;border-radius:8px;box-sizing:border-box;overflow:hidden;"></div>
<div class="r" style="left:36px;top:658px;width:1547px;height:55px;background:#f6f6f9;border-radius:7px 7px 0 0;"></div>
<div class="r" style="left:36px;top:713px;width:1547px;height:1px;background:#dddce1;"></div>
<div class="r" style="left:36px;top:758px;width:1547px;height:1px;background:#dddce1;"></div>
<div class="r" style="left:36px;top:802px;width:1547px;height:1px;background:#dddce1;"></div>
<div class="r" style="left:36px;top:847px;width:1547px;height:1px;background:#dddce1;"></div>
<div class="r" style="left:36px;top:891px;width:1547px;height:1px;background:#dddce1;"></div>
<div class="t " style="left:55.60px;top:679.03px;font-size:14.5px;color:#605b69;-webkit-text-stroke:0.46px #605b69;letter-spacing:-0.371px;">EVENT ID</div>
<div class="t " style="left:267.60px;top:679.03px;font-size:14.5px;color:#605b69;-webkit-text-stroke:0.46px #605b69;letter-spacing:-0.767px;">USER</div>
<div class="t " style="left:473.60px;top:679.53px;font-size:14.5px;color:#605b69;-webkit-text-stroke:0.46px #605b69;letter-spacing:-0.412px;">OPERATION DURATION</div>
<svg class="r" style="left:635px;top:678px;" width="16" height="16" viewBox="0 0 16 16"><circle cx="8" cy="8" r="6.4" fill="none" stroke="#8c8a92" stroke-width="1.3"/><path d="M6.18 6.67 C6.18 5.20 7.16 4.78 8.00 4.78 C9.05 4.78 9.82 5.48 9.82 6.46 C9.82 7.72 8.00 8.14 8.00 9.54 M8.00 10.38 V10.94" fill="none" stroke="#8c8a92" stroke-width="1.15" stroke-linecap="round"/></svg>
<div class="t " style="left:865.60px;top:679.03px;font-size:14.5px;color:#605b69;-webkit-text-stroke:0.46px #605b69;letter-spacing:-0.246px;">TOTAL DURATION</div>
<div class="t " style="left:1025.00px;top:679.03px;font-size:14.5px;color:#605b69;-webkit-text-stroke:0.46px #605b69;letter-spacing:-0.471px;">TRACE ID</div>
<div class="t " style="left:1235.00px;top:679.03px;font-size:14.5px;color:#605b69;-webkit-text-stroke:0.46px #605b69;letter-spacing:-0.088px;">TIMESTAMP</div>
<div class="t " style="left:55.90px;top:727.91px;font-size:17px;color:#2a5cc8;-webkit-text-stroke:0.2px #2a5cc8;letter-spacing:0.857px;">f728fa2f</div>
<div class="t " style="left:266.80px;top:727.91px;font-size:17px;color:#55515c;-webkit-text-stroke:0.2px #55515c;letter-spacing:0.089px;">(no value)</div>
<div class="r" style="left:473px;top:726.8px;width:263px;height:19.0px;background:#ebe9ee;"></div>
<div class="r" style="left:473px;top:726.8px;width:35.60000000000002px;height:19.0px;background:#84518b;"></div>
<div class="t " style="left:942.60px;top:727.91px;font-size:17px;color:#27242c;-webkit-text-stroke:0.2px #27242c;letter-spacing:0.325px;">2.47s</div>
<div class="t " style="left:1025.40px;top:727.91px;font-size:17px;color:#2a5cc8;-webkit-text-stroke:0.2px #2a5cc8;letter-spacing:0.886px;">b6fc965f</div>
<div class="t " style="left:1236.30px;top:727.91px;font-size:17px;color:#45414d;-webkit-text-stroke:0.2px #45414d;letter-spacing:0.296px;">Jun 21, 2025 9:50:47 AM UTC</div>
<div class="t " style="left:55.90px;top:772.36px;font-size:17px;color:#2a5cc8;-webkit-text-stroke:0.2px #2a5cc8;letter-spacing:0.471px;">ac0c8291</div>
<div class="t " style="left:266.80px;top:772.36px;font-size:17px;color:#55515c;-webkit-text-stroke:0.2px #55515c;letter-spacing:0.089px;">(no value)</div>
<div class="r" style="left:473px;top:770.7px;width:263px;height:19.0px;background:#ebe9ee;"></div>
<div class="r" style="left:473px;top:770.7px;width:57.39999999999998px;height:19.0px;background:#84518b;"></div>
<div class="t " style="left:942.60px;top:772.36px;font-size:17px;color:#27242c;-webkit-text-stroke:0.2px #27242c;letter-spacing:0.325px;">2.47s</div>
<div class="t " style="left:1025.40px;top:772.36px;font-size:17px;color:#2a5cc8;-webkit-text-stroke:0.2px #2a5cc8;letter-spacing:0.371px;">24bec7b5</div>
<div class="t " style="left:1236.30px;top:772.36px;font-size:17px;color:#45414d;-webkit-text-stroke:0.2px #45414d;letter-spacing:0.296px;">Jun 20, 2025 4:06:55 AM UTC</div>
<div class="t " style="left:55.90px;top:816.81px;font-size:17px;color:#2a5cc8;-webkit-text-stroke:0.2px #2a5cc8;letter-spacing:0.829px;">b52860b9</div>
<div class="t " style="left:266.80px;top:816.81px;font-size:17px;color:#55515c;-webkit-text-stroke:0.2px #55515c;letter-spacing:0.089px;">(no value)</div>
<div class="r" style="left:473px;top:814.9px;width:263px;height:19.0px;background:#ebe9ee;"></div>
<div class="r" style="left:473px;top:814.9px;width:161.10000000000002px;height:19.0px;background:#84518b;"></div>
<div class="t " style="left:942.60px;top:816.81px;font-size:17px;color:#27242c;-webkit-text-stroke:0.2px #27242c;letter-spacing:0.325px;">2.43s</div>
<div class="t " style="left:1025.40px;top:816.81px;font-size:17px;color:#2a5cc8;-webkit-text-stroke:0.2px #2a5cc8;letter-spacing:1.029px;">c8c50f95</div>
<div class="t " style="left:1236.30px;top:816.81px;font-size:17px;color:#45414d;-webkit-text-stroke:0.2px #45414d;letter-spacing:0.296px;">Jun 10, 2025 2:19:04 AM UTC</div>
<div class="t " style="left:55.90px;top:861.26px;font-size:17px;color:#2a5cc8;-webkit-text-stroke:0.2px #2a5cc8;letter-spacing:0.400px;">6597934e</div>
<div class="t " style="left:266.80px;top:861.26px;font-size:17px;color:#55515c;-webkit-text-stroke:0.2px #55515c;letter-spacing:0.089px;">(no value)</div>
<div class="r" style="left:473px;top:858.8px;width:263px;height:19.0px;background:#ebe9ee;"></div>
<div class="r" style="left:473px;top:858.8px;width:66px;height:19.0px;background:#84518b;"></div>
<div class="t " style="left:942.60px;top:861.26px;font-size:17px;color:#27242c;-webkit-text-stroke:0.2px #27242c;letter-spacing:0.325px;">2.39s</div>
<div class="t " style="left:1025.40px;top:861.26px;font-size:17px;color:#2a5cc8;-webkit-text-stroke:0.2px #2a5cc8;letter-spacing:0.086px;">1f1b605d</div>
<div class="t " style="left:1236.30px;top:861.26px;font-size:17px;color:#45414d;-webkit-text-stroke:0.2px #45414d;letter-spacing:0.296px;">Jun 17, 2025 4:43:43 AM UTC</div>
<div class="t " style="left:55.90px;top:905.71px;font-size:17px;color:#2a5cc8;-webkit-text-stroke:0.2px #2a5cc8;letter-spacing:0.714px;">29f60a97</div>
<div class="t " style="left:266.80px;top:905.71px;font-size:17px;color:#55515c;-webkit-text-stroke:0.2px #55515c;letter-spacing:0.089px;">(no value)</div>
<div class="r" style="left:473px;top:903.1px;width:263px;height:19.0px;background:#ebe9ee;"></div>
<div class="r" style="left:473px;top:903.1px;width:106.60000000000002px;height:19.0px;background:#84518b;"></div>
<div class="t " style="left:942.60px;top:905.71px;font-size:17px;color:#27242c;-webkit-text-stroke:0.2px #27242c;letter-spacing:0.325px;">2.37s</div>
<div class="t " style="left:1025.40px;top:905.71px;font-size:17px;color:#2a5cc8;-webkit-text-stroke:0.2px #2a5cc8;letter-spacing:0.771px;">c28502e4</div>
<div class="t " style="left:1236.30px;top:905.71px;font-size:17px;color:#45414d;-webkit-text-stroke:0.2px #45414d;letter-spacing:0.260px;">Jun 2, 2025 7:04:52 AM UTC</div>
<div class="t " style="left:35.60px;top:967.31px;font-size:17px;color:#605b69;-webkit-text-stroke:0.54px #605b69;letter-spacing:0.550px;">Suspect Spans</div>
<div class="r" style="left:1381px;top:960px;width:122px;height:31px;background:#ffffff;border:1px solid #dddce1;border-radius:6px;box-sizing:border-box;"></div>
<div class="t " style="left:1392.50px;top:968.63px;font-size:14.5px;color:#38343e;-webkit-text-stroke:0.46px #38343e;letter-spacing:0.285px;">View All Spans</div>
<div class="r" style="left:1513px;top:960px;width:71px;height:31px;background:#ffffff;border:1px solid #dddce1;border-radius:6px;box-sizing:border-box;"></div>
<div class="r" style="left:1548px;top:961px;width:1px;height:29px;background:#dddce1;"></div>
<svg class="r" style="left:1525px;top:968px;" width="14" height="15" viewBox="0 0 14 15"><path d="M9.5 1.5 L3.5 7.5 L9.5 13.5" fill="none" stroke="#a79fb3" stroke-width="1.5"/></svg>
<svg class="r" style="left:1560px;top:968px;" width="14" height="15" viewBox="0 0 14 15"><path d="M3.5 1.5 L9.5 7.5 L3.5 13.5" fill="none" stroke="#38343e" stroke-width="1.5"/></svg>
<div class="r" style="left:35px;top:1005px;width:1549px;height:135px;background:#ffffff;border:1px solid #dddce1;border-radius:8px;box-sizing:border-box;overflow:hidden;"></div>
<div class="r" style="left:36px;top:1006px;width:1547px;height:55px;background:#f6f6f9;border-radius:7px 7px 0 0;"></div>
<div class="r" style="left:36px;top:1061px;width:1547px;height:1px;background:#dddce1;"></div>
<div class="r" style="left:36px;top:1113px;width:1547px;height:1px;background:#dddce1;"></div>
<div class="t " style="left:57.00px;top:1026.53px;font-size:14.5px;color:#605b69;-webkit-text-stroke:0.46px #605b69;letter-spacing:-0.354px;">SPAN OPERATION</div>
<div class="t " style="left:221.00px;top:1026.53px;font-size:14.5px;color:#605b69;-webkit-text-stroke:0.46px #605b69;letter-spacing:-0.200px;">SPAN NAME</div>
<div class="t " style="left:1173.20px;top:1026.43px;font-size:14.5px;color:#605b69;-webkit-text-stroke:0.46px #605b69;letter-spacing:-0.625px;">FREQUENCY</div>
<div class="t " style="left:1300.90px;top:1026.43px;font-size:14.5px;color:#605b69;-webkit-text-stroke:0.46px #605b69;letter-spacing:-0.267px;">P75 SELF TIME</div>
<div class="t " style="left:1444.20px;top:1026.43px;font-size:14.5px;color:#605b69;-webkit-text-stroke:0.46px #605b69;letter-spacing:-0.329px;">TOTAL SELF TIME</div>
<div class="t " style="left:60.80px;top:1078.91px;font-size:17px;color:#27242c;-webkit-text-stroke:0.2px #27242c;letter-spacing:0.783px;">default</div>
<div class="t " style="left:219.80px;top:1078.91px;font-size:17px;color:#2a5cc8;-webkit-text-stroke:0.2px #2a5cc8;letter-spacing:0.482px;">prisma:client:operation</div>
<div class="t " style="left:1202.50px;top:1078.51px;font-size:17px;color:#27242c;-webkit-text-stroke:0.2px #27242c;letter-spacing:0.040px;">76.79%</div>
<div class="t " style="left:1344.90px;top:1078.51px;font-size:17px;color:#27242c;-webkit-text-stroke:0.2px #27242c;letter-spacing:0.580px;">2.78ms</div>
<div class="t " style="left:1511.90px;top:1078.51px;font-size:17px;color:#27242c;-webkit-text-stroke:0.2px #27242c;letter-spacing:0.600px;">1.76hr</div>
<div class="t " style="left:1609.30px;top:199.71px;font-size:17px;color:#605b69;-webkit-text-stroke:0.54px #605b69;letter-spacing:0.330px;">User Misery</div>
<svg class="r" style="left:1713px;top:199px;" width="18" height="18" viewBox="0 0 18 18"><circle cx="9" cy="9" r="7.4" fill="none" stroke="#8c8a92" stroke-width="1.3"/><path d="M6.92 7.48 C6.92 5.80 8.04 5.32 9.00 5.32 C10.20 5.32 11.08 6.12 11.08 7.24 C11.08 8.68 9.00 9.16 9.00 10.76 M9.00 11.72 V12.36" fill="none" stroke="#8c8a92" stroke-width="1.15" stroke-linecap="round"/></svg>
<div class="r" style="left:1611.3px;top:230px;width:5.0px;height:37px;background:#dcdbe0;"></div>
<div class="r" style="left:1621.0px;top:230px;width:5.0px;height:37px;background:#dcdbe0;"></div>
<div class="r" style="left:1630.7px;top:230px;width:5.0px;height:37px;background:#dcdbe0;"></div>
<div class="r" style="left:1640.3px;top:230px;width:5.0px;height:37px;background:#dcdbe0;"></div>
<div class="r" style="left:1650.0px;top:230px;width:5.0px;height:37px;background:#dcdbe0;"></div>
<div class="r" style="left:1659.7px;top:230px;width:5.0px;height:37px;background:#dcdbe0;"></div>
<div class="r" style="left:1669.4px;top:230px;width:5.0px;height:37px;background:#dcdbe0;"></div>
<div class="r" style="left:1679.1px;top:230px;width:5.0px;height:37px;background:#dcdbe0;"></div>
<div class="r" style="left:1688.7px;top:230px;width:5.0px;height:37px;background:#dcdbe0;"></div>
<div class="r" style="left:1698.4px;top:230px;width:5.0px;height:37px;background:#dcdbe0;"></div>
<div class="r" style="left:1708.1px;top:230px;width:5.0px;height:37px;background:#dcdbe0;"></div>
<div class="r" style="left:1717.8px;top:230px;width:5.0px;height:37px;background:#dcdbe0;"></div>
<div class="r" style="left:1727.5px;top:230px;width:5.0px;height:37px;background:#dcdbe0;"></div>
<div class="r" style="left:1737.1px;top:230px;width:5.0px;height:37px;background:#dcdbe0;"></div>
<div class="r" style="left:1746.8px;top:230px;width:5.0px;height:37px;background:#dcdbe0;"></div>
<div class="r" style="left:1756.5px;top:230px;width:5.0px;height:37px;background:#dcdbe0;"></div>
<div class="r" style="left:1766.2px;top:230px;width:5.0px;height:37px;background:#dcdbe0;"></div>
<div class="r" style="left:1775.9px;top:230px;width:5.0px;height:37px;background:#dcdbe0;"></div>
<div class="r" style="left:1785.5px;top:230px;width:5.0px;height:37px;background:#dcdbe0;"></div>
<div class="r" style="left:1795.2px;top:230px;width:5.0px;height:37px;background:#dcdbe0;"></div>
<div class="r" style="left:1804.9px;top:230px;width:5.0px;height:37px;background:#dcdbe0;"></div>
<div class="r" style="left:1814.6px;top:230px;width:5.0px;height:37px;background:#dcdbe0;"></div>
<div class="r" style="left:1824.3px;top:230px;width:5.0px;height:37px;background:#dcdbe0;"></div>
<div class="r" style="left:1833.9px;top:230px;width:5.0px;height:37px;background:#dcdbe0;"></div>
<div class="r" style="left:1843.6px;top:230px;width:5.0px;height:37px;background:#dcdbe0;"></div>
<div class="r" style="left:1853.3px;top:230px;width:5.0px;height:37px;background:#dcdbe0;"></div>
<div class="r" style="left:1863.0px;top:230px;width:5.0px;height:37px;background:#dcdbe0;"></div>
<div class="r" style="left:1872.7px;top:230px;width:5.0px;height:37px;background:#dcdbe0;"></div>
<div class="r" style="left:1882.3px;top:230px;width:5.0px;height:37px;background:#dcdbe0;"></div>
<div class="r" style="left:1892.0px;top:230px;width:5.0px;height:37px;background:#dcdbe0;"></div>
<div class="r" style="left:1901.7px;top:230px;width:5.0px;height:37px;background:#dcdbe0;"></div>
<div class="r" style="left:1911.4px;top:230px;width:5.0px;height:37px;background:#dcdbe0;"></div>
<div class="r" style="left:1921.1px;top:230px;width:5.0px;height:37px;background:#dcdbe0;"></div>
<div class="r" style="left:1930.7px;top:230px;width:5.0px;height:37px;background:#dcdbe0;"></div>
<div class="r" style="left:1940.4px;top:230px;width:5.0px;height:37px;background:#dcdbe0;"></div>
<div class="r" style="left:1950.1px;top:230px;width:5.0px;height:37px;background:#dcdbe0;"></div>
<div class="r" style="left:1959.8px;top:230px;width:5.0px;height:37px;background:#dcdbe0;"></div>
<div class="r" style="left:1969.5px;top:230px;width:5.0px;height:37px;background:#dcdbe0;"></div>
<div class="r" style="left:1979.1px;top:230px;width:5.0px;height:37px;background:#dcdbe0;"></div>
<div class="r" style="left:1988.8px;top:230px;width:5.0px;height:37px;background:#dcdbe0;"></div>
<div class="t " style="left:1609.30px;top:304.91px;font-size:17px;color:#605b69;-webkit-text-stroke:0.54px #605b69;letter-spacing:0.707px;">Status Breakdown</div>
<svg class="r" style="left:1767.7px;top:304px;" width="18.0" height="18" viewBox="0 0 18.0 18"><circle cx="9" cy="9" r="7.4" fill="none" stroke="#8c8a92" stroke-width="1.3"/><path d="M6.92 7.48 C6.92 5.80 8.04 5.32 9.00 5.32 C10.20 5.32 11.08 6.12 11.08 7.24 C11.08 8.68 9.00 9.16 9.00 10.76 M9.00 11.72 V12.36" fill="none" stroke="#8c8a92" stroke-width="1.15" stroke-linecap="round"/></svg>
<div class="t " style="left:1612.00px;top:337.92px;font-size:21px;color:#27242c;-webkit-text-stroke:0.2px #27242c;letter-spacing:-1.900px;">77%</div>
<div class="r" style="left:1661px;top:333px;width:261px;height:30px;background:#dcdbe0;border-radius:3px;"></div>
<div class="t " style="left:1670.70px;top:341.03px;font-size:14.5px;color:#27242c;-webkit-text-stroke:0.2px #27242c;letter-spacing:-0.400px;">ok</div>
<div class="t " style="left:1609.30px;top:378.02px;font-size:21px;color:#27242c;-webkit-text-stroke:0.2px #27242c;letter-spacing:-0.550px;">23%</div>
<div class="r" style="left:1661px;top:373px;width:80px;height:30px;background:#dcdbe0;border-radius:3px;"></div>
<div class="t " style="left:1670.70px;top:381.03px;font-size:14.5px;color:#27242c;-webkit-text-stroke:0.2px #27242c;letter-spacing:0.650px;">unauthenticated</div>
<div class="t " style="left:1621.30px;top:418.12px;font-size:21px;color:#27242c;-webkit-text-stroke:0.2px #27242c;letter-spacing:-1.500px;">0%</div>
<div class="t " style="left:1670.70px;top:421.03px;font-size:14.5px;color:#27242c;-webkit-text-stroke:0.2px #27242c;letter-spacing:0.700px;">internal_error</div>
<div class="t " style="left:1609.20px;top:472.11px;font-size:17px;color:#605b69;-webkit-text-stroke:0.54px #605b69;letter-spacing:0.600px;">Apdex</div>
<svg class="r" style="left:1669.5px;top:471px;" width="18.0" height="18" viewBox="0 0 18.0 18"><circle cx="9" cy="9" r="7.4" fill="none" stroke="#8c8a92" stroke-width="1.3"/><path d="M6.92 7.48 C6.92 5.80 8.04 5.32 9.00 5.32 C10.20 5.32 11.08 6.12 11.08 7.24 C11.08 8.68 9.00 9.16 9.00 10.76 M9.00 11.72 V12.36" fill="none" stroke="#8c8a92" stroke-width="1.15" stroke-linecap="round"/></svg>
<div class="t " style="left:1609.20px;top:497.32px;font-size:21px;color:#27242c;-webkit-text-stroke:0.2px #27242c;letter-spacing:0.420px;">0.9372</div>
<div class="t " style="left:1634.10px;top:533.10px;font-size:15px;color:#605b69;-webkit-text-stroke:0.2px #605b69;">1</div>
<div class="t " style="left:1621.50px;top:551.50px;font-size:15px;color:#605b69;-webkit-text-stroke:0.2px #605b69;">0.8</div>
<div class="t " style="left:1621.50px;top:569.90px;font-size:15px;color:#605b69;-webkit-text-stroke:0.2px #605b69;">0.6</div>
<div class="t " style="left:1621.50px;top:588.30px;font-size:15px;color:#605b69;-webkit-text-stroke:0.2px #605b69;">0.4</div>
<div class="t " style="left:1621.50px;top:606.70px;font-size:15px;color:#605b69;-webkit-text-stroke:0.2px #605b69;">0.2</div>
<div class="t " style="left:1634.10px;top:625.10px;font-size:15px;color:#605b69;-webkit-text-stroke:0.2px #605b69;">0</div>
<svg class="r" style="left:1640px;top:530px;" width="360" height="115" viewBox="0 0 360 115"><path d="M12.0 12.2 L14.0 13.2 L16.0 12.7 L18.0 13.4 L20.0 13.5 L22.0 11.8 L24.0 11.7 L26.0 14.2 L28.0 12.5 L30.0 12.4 L32.0 14.8 L34.0 13.2 L36.0 14.3 L38.0 13.3 L40.0 13.8 L42.0 12.4 L44.0 13.8 L46.0 14.6 L48.0 13.5 L50.0 14.2 L52.0 14.0 L54.0 12.3 L56.0 14.4 L58.0 13.9 L60.0 13.0 L62.0 12.3 L64.0 14.8 L66.0 13.0 L68.0 101.0 L70.0 103.0 L72.0 103.0 L74.0 103.0 L76.0 103.0 L78.0 103.0 L80.0 103.0 L82.0 103.0 L84.0 103.0 L86.0 103.0 L88.0 103.0 L90.0 58.0 L92.0 14.0 L94.0 14.7 L96.0 15.3 L98.0 14.8 L100.0 15.4 L102.0 13.9 L104.0 15.1 L106.0 14.1 L108.0 15.6 L110.0 15.4 L112.0 13.1 L114.0 13.3 L116.0 13.5 L118.0 15.8 L120.0 14.2 L122.0 14.8 L124.0 13.9 L126.0 14.5 L128.0 14.2 L130.0 14.1 L132.0 14.9 L134.0 14.9 L136.0 15.9 L138.0 15.2 L140.0 16.0 L142.0 15.8 L144.0 16.2 L146.0 15.3 L148.0 13.8 L150.0 15.9 L152.0 16.3 L154.0 16.1 L156.0 15.1 L158.0 15.6 L160.0 14.1 L162.0 16.0 L164.0 15.2 L166.0 14.4 L168.0 13.8 L170.0 16.2 L172.0 16.6 L174.0 13.9 L176.0 16.1 L178.0 14.9 L180.0 14.2 L182.0 14.6 L184.0 16.1 L186.0 16.4 L188.0 14.0 L190.0 15.7 L192.0 14.0 L194.0 16.1 L196.0 14.9 L198.0 16.6 L200.0 16.9 L202.0 15.5 L204.0 17.1 L206.0 15.0 L208.0 14.3 L210.0 15.9 L212.0 14.3 L214.0 14.8 L216.0 15.4 L218.0 16.1 L220.0 14.7 L222.0 14.4 L224.0 16.9 L226.0 15.3 L228.0 17.3 L230.0 17.1 L232.0 15.6 L234.0 15.8 L236.0 16.0 L238.0 16.4 L240.0 16.3 L242.0 16.2 L244.0 16.4 L246.0 17.4 L248.0 16.2 L250.0 16.0 L252.0 16.9 L254.0 15.4 L256.0 15.7 L258.0 17.7 L260.0 16.4 L262.0 16.5 L264.0 14.9 L266.0 16.1 L268.0 16.6 L270.0 15.0 L272.0 16.8 L274.0 16.9 L276.0 15.2 L278.0 16.9 L280.0 16.5 L282.0 17.1 L284.0 16.2 L286.0 17.3 L288.0 17.4 L290.0 15.3 L292.0 15.4 L294.0 17.3 L296.0 18.2 L298.0 16.1 L300.0 16.7 L302.0 17.1 L304.0 16.3 L306.0 16.5 L308.0 16.4 L310.0 16.6 L312.0 17.3 L314.0 16.4 L316.0 16.7 L318.0 17.9 L320.0 15.7 L322.0 17.3 L324.0 17.9 L326.0 16.6 L328.0 16.4 L330.0 18.1 L332.0 16.5 L334.0 16.3 L336.0 17.1 L338.0 17.9 L340.0 16.2 L342.0 16.9 L344.0 16.9 L346.0 18.4 L348.0 17.3 L350.0 18.6" fill="none" stroke="#3f3b72" stroke-width="2" stroke-linejoin="round"/></svg>
<div class="t " style="left:1609.00px;top:665.91px;font-size:17px;color:#605b69;-webkit-text-stroke:0.54px #605b69;letter-spacing:0.327px;">Failure Rate</div>
<svg class="r" style="left:1715px;top:665px;" width="18" height="18" viewBox="0 0 18 18"><circle cx="9" cy="9" r="7.4" fill="none" stroke="#8c8a92" stroke-width="1.3"/><path d="M6.92 7.48 C6.92 5.80 8.04 5.32 9.00 5.32 C10.20 5.32 11.08 6.12 11.08 7.24 C11.08 8.68 9.00 9.16 9.00 10.76 M9.00 11.72 V12.36" fill="none" stroke="#8c8a92" stroke-width="1.15" stroke-linecap="round"/></svg>
<div class="t " style="left:1609.20px;top:690.52px;font-size:21px;color:#27242c;-webkit-text-stroke:0.2px #27242c;letter-spacing:0.220px;">23.52%</div>
<div class="t " style="left:1617.20px;top:726.90px;font-size:15px;color:#605b69;-webkit-text-stroke:0.2px #605b69;">100%</div>
<div class="t " style="left:1625.60px;top:772.65px;font-size:15px;color:#605b69;-webkit-text-stroke:0.2px #605b69;">50%</div>
<div class="t " style="left:1633.90px;top:818.40px;font-size:15px;color:#605b69;-webkit-text-stroke:0.2px #605b69;">0%</div>
<svg class="r" style="left:1660px;top:780px;" width="340" height="55" viewBox="0 0 340 55"><path d="M5.4 26.9 L7.4 29.5 L9.3 26.9 L12.3 27.9 L15.2 28.9 L18.1 29.8 L20.1 34.7 L22.0 27.9 L24.0 25.9 L25.9 28.9 L28.9 30.8 L31.8 31.8 L34.7 28.9 L37.7 30.8 L40.6 30.8 L42.5 22.0 L44.5 32.8 L47.4 28.9 L50.4 30.8 L53.3 31.8 L57.2 24.0 L59.5 46.4 L79.6 46.4 L81.6 33.8 L84.5 34.7 L86.5 25.0 L90.4 25.9 L94.3 32.8 L96.2 31.8 L100.2 26.9 L103.1 28.9 L107.0 31.8 L108.9 27.9 L111.9 26.9 L113.8 23.0 L116.8 33.8 L118.7 28.9 L122.6 25.0 L125.5 24.0 L128.5 25.9 L131.4 22.0 L135.3 21.1 L137.3 30.8 L140.2 24.0 L144.1 24.0 L148.0 29.8 L152.9 20.1 L155.8 23.0 L158.8 27.9 L162.7 24.0 L166.6 28.9 L167.5 31.8 L170.5 29.8 L173.4 26.9 L176.3 24.0 L179.3 27.9 L182.2 31.8 L186.1 30.8 L189.0 25.9 L192.0 32.8 L194.9 27.9 L199.8 25.9 L202.7 24.0 L205.6 14.2 L209.5 17.1 L212.5 23.0 L215.4 19.1 L219.3 20.1 L222.2 23.0 L225.2 21.1 L227.1 25.9 L231.0 27.9 L233.9 25.0 L236.9 26.9 L239.8 22.0 L242.7 24.0 L245.7 25.9 L248.6 24.0 L250.5 18.1 L253.5 19.1 L256.4 26.9 L260.3 23.0 L263.2 21.1 L266.2 25.0 L269.1 27.9 L272.0 24.0 L275.9 25.9 L279.8 23.0 L281.8 20.1 L285.7 22.0 L288.6 21.1 L291.6 27.9 L295.5 24.0 L299.4 26.9 L302.3 22.0 L305.2 22.0 L308.2 26.9 L313.0 20.1 L316.0 25.0 L319.9 23.0 L322.8 26.9 L326.7 22.0 L328.7 20.1 L329.6 14.2" fill="none" stroke="#9d4a8b" stroke-width="2" stroke-linejoin="round"/></svg>
<div class="t " style="left:1609.00px;top:866.91px;font-size:17px;color:#605b69;-webkit-text-stroke:0.54px #605b69;letter-spacing:0.510px;">Tag Summary</div>
<div class="t " style="left:1609.00px;top:896.76px;font-size:18px;color:#1d1a21;-webkit-text-stroke:0.58px #1d1a21;letter-spacing:0.750px;">client_os</div>
<div class="t " style="left:1899.00px;top:897.61px;font-size:17px;color:#605b69;-webkit-text-stroke:0.2px #605b69;letter-spacing:-0.567px;">iOS 18.5.0</div>
<svg class="r" style="left:1984px;top:901px;" width="14" height="9" viewBox="0 0 14 9"><path d="M1 8 L7.0 1 L13 8" fill="none" stroke="#38343e" stroke-width="1.5" stroke-linecap="round" stroke-linejoin="round"/></svg>
<div class="r" style="left:1609px;top:919px;width:393px;height:19px;background:#e5dff3;"></div>
<div class="r" style="left:1609px;top:919px;width:139px;height:19px;background:#3d2a6d;"></div>
<div class="r" style="left:1748px;top:919px;width:15px;height:19px;background:#5d4592;"></div>
<div class="r" style="left:1763px;top:919px;width:13px;height:19px;background:#8c74bc;"></div>
<div class="r" style="left:1776px;top:919px;width:14px;height:19px;background:#b6a4de;"></div>
<div class="t " style="left:1717.90px;top:923.00px;font-size:13px;color:#ffffff;-webkit-text-stroke:0.2px #ffffff;letter-spacing:-0.450px;">35%</div>
<div class="r" style="left:1608.5px;top:956.3px;width:13.0px;height:13.0px;background:#3e2a6e;border-radius:7px;"></div>
<div class="t " style="left:1632.30px;top:955.63px;font-size:14.5px;color:#27242c;-webkit-text-stroke:0.2px #27242c;letter-spacing:-0.433px;">iOS 18.5.0</div>
<div class="t " style="left:1972.70px;top:955.63px;font-size:14.5px;color:#605b69;-webkit-text-stroke:0.2px #605b69;">35%</div>
<div class="r" style="left:1608.5px;top:986.4px;width:13.0px;height:13.0px;background:#6b4c9f;border-radius:7px;"></div>
<div class="t " style="left:1632.30px;top:985.73px;font-size:14.5px;color:#27242c;-webkit-text-stroke:0.2px #27242c;">iOS 18.5</div>
<div class="t " style="left:1980.70px;top:985.73px;font-size:14.5px;color:#605b69;-webkit-text-stroke:0.2px #605b69;">3%</div>
<div class="r" style="left:1608.5px;top:1016.5px;width:13.0px;height:13.0px;background:#9680c9;border-radius:7px;"></div>
<div class="t " style="left:1632.30px;top:1015.83px;font-size:14.5px;color:#27242c;-webkit-text-stroke:0.2px #27242c;">iOS 18.4.1</div>
<div class="t " style="left:1980.70px;top:1015.83px;font-size:14.5px;color:#605b69;-webkit-text-stroke:0.2px #605b69;">3%</div>
<div class="r" style="left:1608.5px;top:1046.6px;width:13.0px;height:13.0px;background:#b9a8e0;border-radius:7px;"></div>
<div class="t " style="left:1632.30px;top:1045.93px;font-size:14.5px;color:#27242c;-webkit-text-stroke:0.2px #27242c;letter-spacing:-0.676px;">Mac OS X &gt;=10.15.7</div>
<div class="t " style="left:1980.70px;top:1045.93px;font-size:14.5px;color:#605b69;-webkit-text-stroke:0.2px #605b69;">3%</div>
<div class="r" style="left:1608.5px;top:1076.7px;width:13.0px;height:13.0px;background:#e3def0;border-radius:7px;"></div>
<div class="t " style="left:1632.30px;top:1076.03px;font-size:14.5px;color:#27242c;-webkit-text-stroke:0.2px #27242c;letter-spacing:0.200px;">Other</div>
<div class="t " style="left:1972.70px;top:1076.03px;font-size:14.5px;color:#605b69;-webkit-text-stroke:0.2px #605b69;">54%</div>
</div></body></html>
